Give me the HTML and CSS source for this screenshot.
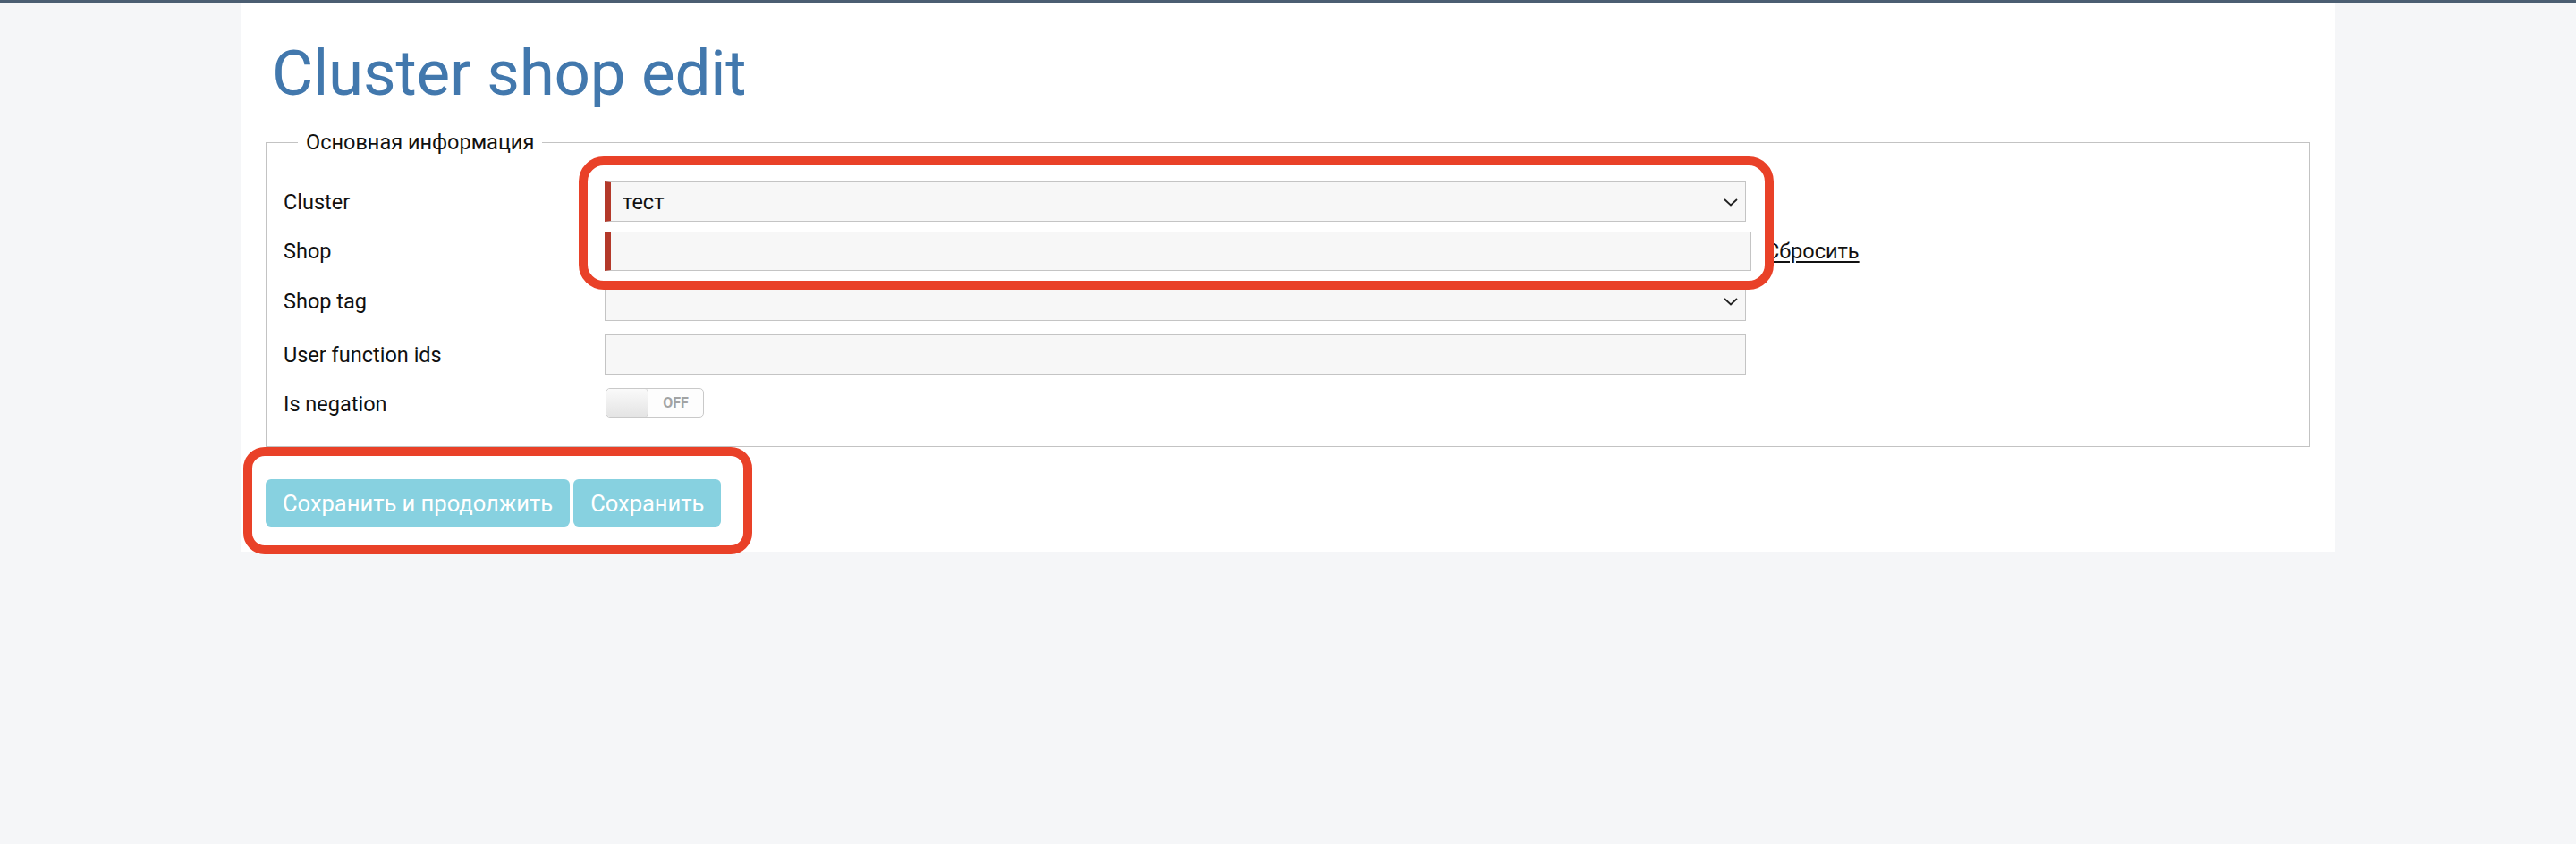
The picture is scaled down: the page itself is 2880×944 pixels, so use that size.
FILE: index.html
```html
<!DOCTYPE html>
<html lang="ru">
<head>
<meta charset="utf-8">
<title>Cluster shop edit</title>
<link rel="stylesheet" href="styles.css">
</head>
<body>
<div class="topbar"></div>
<div class="page">
  <main class="panel">
    <h1 class="title">Cluster shop edit</h1>
    <fieldset class="group">
      <legend class="group-legend">Основная информация</legend>
      <div class="form">
        <label class="label">Cluster</label>
        <div class="control">
          <div class="field select required"><span class="value">тест</span><svg class="chev" width="16" height="9" viewBox="0 0 16 9"><polyline points="1,1 8,7.5 15,1" fill="none" stroke="#222" stroke-width="1.8"/></svg></div>
        </div>

        <label class="label">Shop</label>
        <div class="control">
          <div class="field input required wide"></div>
          <a class="reset" href="#">Сбросить</a>
        </div>

        <label class="label">Shop tag</label>
        <div class="control">
          <div class="field select"><span class="value"></span><svg class="chev" width="16" height="9" viewBox="0 0 16 9"><polyline points="1,1 8,7.5 15,1" fill="none" stroke="#222" stroke-width="1.8"/></svg></div>
        </div>

        <label class="label sep">User function ids</label>
        <div class="control sep">
          <div class="field input"></div>
        </div>

        <label class="label sep low">Is negation</label>
        <div class="control sep">
          <div class="toggle"><span class="knob"></span><span class="toggle-text">OFF</span></div>
        </div>
      </div>
    </fieldset>
    <div class="actions">
      <button class="btn" type="button">Сохранить и продолжить</button>
      <button class="btn" type="button">Сохранить</button>
    </div>
  </main>
</div>
<div class="mark mark-fields"></div>
<div class="mark mark-buttons"></div>
</body>
</html>
```
FILE: styles.css
```css
* { box-sizing: border-box; }
html, body {
  margin: 0;
  padding: 0;
  background: #f5f6f8;
  font-family: Roboto, "Open Sans", sans-serif;
  color: #111;
}
body { position: relative; min-height: 944px; }
.topbar {
  height: 3px;
  background: #4b5e72;
}
.page {
  padding-left: 270px;
}
.panel {
  width: 2340px;
  background: #ffffff;
  padding: 44px 27px 28px 27px;
}
.title {
  margin: 0 0 0 7px;
  font-size: 71px;
  line-height: 70px;
  font-weight: 400;
  color: #4278ad;
  letter-spacing: -0.2px;
}
.group {
  margin: 29px 0 0 0;
  border: 1px solid #c3c3c3;
  padding: 31px 19px 32px 19px;
  min-width: 0;
}
.group-legend {
  margin-left: 16px;
  padding: 0 9px;
  font-size: 23.5px;
  line-height: 26px;
  color: #111;
}
.form {
  display: grid;
  grid-template-columns: 359px 1276px;
  row-gap: 11px;
  align-items: center;
}
.label {
  font-size: 23.5px;
  line-height: 26px;
  color: #111;
}
.label.low { padding-top: 3px; }
.sep { margin-top: 4px; }
.control {
  display: flex;
  align-items: center;
}
.field {
  height: 45px;
  width: 1276px;
  flex: none;
  background: #f7f7f7;
  border: 1px solid #c4c4c4;
  display: flex;
  align-items: center;
}
.field.wide { width: 1282px; height: 44px; }
.field.required { border-left: 7px solid #b3392a; }
.select { justify-content: space-between; padding: 0 8px 0 13px; }
.select:not(.required) { padding-left: 19px; }
.value {
  font-size: 23.5px;
  line-height: 26px;
  color: #111;
}
.chev { display: block; margin-top: 1px; }
.reset {
  margin-left: 16px;
  font-size: 23.5px;
  line-height: 26px;
  color: #111;
  text-decoration: underline;
  text-underline-offset: 3px;
}
.toggle {
  margin-left: 1px;
  width: 110px;
  height: 33px;
  border: 1px solid #c9c9c9;
  border-radius: 5px;
  display: flex;
  overflow: hidden;
  background: #fdfdfd;
}
.knob {
  width: 47px;
  height: 100%;
  background: linear-gradient(#fafafa, #e4e4e4);
  border-right: 1px solid #c4c4c4;
  border-radius: 4px;
}
.toggle-text {
  flex: 1;
  display: flex;
  align-items: center;
  justify-content: center;
  font-size: 16px;
  font-weight: 700;
  color: #a3a3a3;
}
.actions {
  margin-top: 36px;
  display: flex;
  gap: 4px;
}
.btn {
  height: 53px;
  padding: 0 19px;
  border: 0;
  border-radius: 6px;
  background: #87d1e0;
  color: #ffffff;
  font-family: Roboto, "Open Sans", sans-serif;
  font-size: 25.5px;
  font-weight: 400;
}
.mark {
  position: absolute;
  border: 10px solid #e94128;
  pointer-events: none;
}
.mark-fields {
  left: 647px;
  top: 175px;
  width: 1336px;
  height: 149px;
  border-radius: 28px;
}
.mark-buttons {
  left: 272px;
  top: 500px;
  width: 569px;
  height: 120px;
  border-radius: 24px;
}
```
